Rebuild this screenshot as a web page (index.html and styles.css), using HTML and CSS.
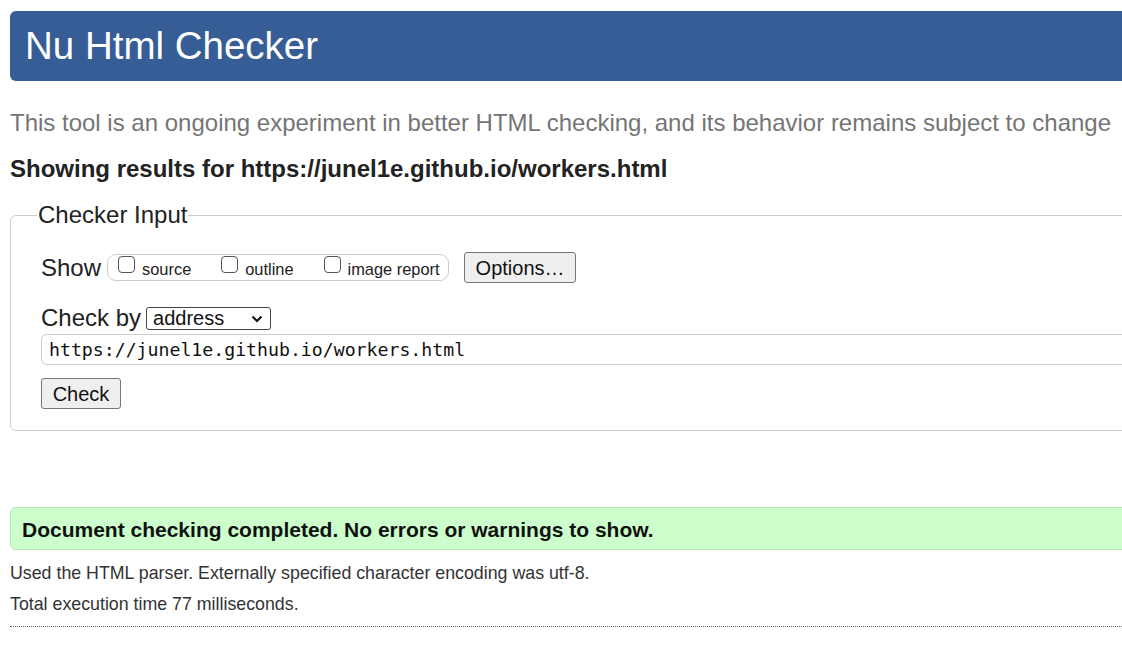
FILE: index.html
```html
<!DOCTYPE html>
<html lang="en">
<head>
<meta charset="utf-8">
<title>Nu Html Checker</title>
<link rel="stylesheet" href="styles.css">
</head>
<body>
<div class="page">
  <h1 class="banner">Nu Html Checker</h1>
  <p class="about">This tool is an ongoing experiment in better HTML checking, and its behavior remains subject to change</p>
  <h2 class="results">Showing results for https://junel1e.github.io/workers.html</h2>
  <form class="checker">
    <fieldset class="inputs">
      <legend class="legend">Checker Input</legend>
      <div class="row show-row">
        <span class="label">Show</span>
        <span class="show-group">
          <label class="opt"><input type="checkbox" class="box"><span>source</span></label>
          <label class="opt"><input type="checkbox" class="box"><span>outline</span></label>
          <label class="opt last"><input type="checkbox" class="box"><span>image report</span></label>
        </span>
        <button type="button" class="btn options">Options…</button>
      </div>
      <div class="row by-row">
        <span class="label">Check by</span>
        <span class="select-wrap">
          <select class="select"><option>address</option></select>
          <svg class="chev" width="12" height="8" viewBox="0 0 12 8"><path d="M1.5 1.5 L6 6 L10.5 1.5" fill="none" stroke="#111" stroke-width="2.2"/></svg>
        </span>
      </div>
      <input class="url" type="text" value="https://junel1e.github.io/workers.html">
      <div class="row submit-row">
        <button type="button" class="btn check">Check</button>
      </div>
    </fieldset>
  </form>
  <p class="success">Document checking completed. No errors or warnings to show.</p>
  <p class="info">Used the HTML parser. Externally specified character encoding was utf-8.</p>
  <p class="info">Total execution time 77 milliseconds.</p>
  <hr class="rule">
</div>
</body>
</html>
```
FILE: styles.css
```css
html {
  overflow: hidden;
}
body {
  margin: 0;
  font-family: "Liberation Sans", Arial, sans-serif;
  color: #222;
  background: #fff;
}
.page {
  width: 1200px;
  padding: 11px 0 0 10px;
}
.banner {
  margin: 0;
  height: 70px;
  line-height: 70px;
  padding-left: 15px;
  background: #365d95;
  color: #fff;
  font-size: 38.5px;
  font-weight: normal;
  border-radius: 6px;
}
.about {
  margin: 28px 0 0;
  font-size: 24px;
  line-height: 28px;
  color: #757575;
}
.results {
  margin: 19px 0 0;
  font-size: 24px;
  line-height: 26px;
  font-weight: bold;
  color: #222;
}
.checker {
  margin: 19px 0 0;
}
.inputs {
  margin: 0;
  border: 1px solid #cccccc;
  border-radius: 6px;
  padding: 0 0 21px 30px;
  min-width: 0;
}
.legend {
  margin-left: -4px;
  padding: 0 1px;
  font-size: 24px;
  line-height: 28px;
  color: #222;
}
.row {
  display: flex;
  align-items: center;
}
.label {
  font-size: 24px;
  color: #222;
}
.show-row {
  margin-top: 23px;
  height: 31px;
}
.show-group {
  display: flex;
  align-items: flex-start;
  margin-left: 6px;
  height: 25px;
  border: 1px solid #cccccc;
  border-radius: 9px;
  padding: 0 8px 0 10px;
}
.opt {
  display: flex;
  align-items: flex-start;
  margin-right: 30px;
  font-size: 16.4px;
  color: #222;
}
.opt.last {
  margin-right: 0;
}
.opt span {
  padding-top: 5px;
}
.box {
  appearance: none;
  -webkit-appearance: none;
  width: 17px;
  height: 17px;
  margin: 1px 7px 0 0;
  border: 1px solid #555;
  border-radius: 4px;
  background: #fff;
}
.btn {
  font-family: "Liberation Sans", Arial, sans-serif;
  font-size: 20px;
  color: #111;
  background: #efefef;
  border: 1px solid #767676;
  border-radius: 3px;
  height: 31px;
  padding: 1px 11px 0;
}
.options {
  margin-left: 15px;
  width: 112px;
}
.by-row {
  margin-top: 23px;
  height: 24px;
}
.select-wrap {
  position: relative;
  margin-left: 5px;
  display: inline-block;
  height: 23px;
}
.select {
  appearance: none;
  -webkit-appearance: none;
  width: 125px;
  height: 23px;
  border: 1px solid #444;
  border-radius: 3px;
  background: #fff;
  font-family: "Liberation Sans", Arial, sans-serif;
  font-size: 20px;
  color: #111;
  padding: 0 0 0 6px;
  line-height: 21px;
}
.chev {
  position: absolute;
  right: 8px;
  top: 8px;
  pointer-events: none;
}
.url {
  display: block;
  box-sizing: border-box;
  margin: 4px 0 0;
  width: calc(100% + 2px);
  height: 31px;
  border: 1px solid #cccccc;
  border-radius: 6px;
  padding: 0 0 0 7px;
  font-family: "DejaVu Sans Mono", "Liberation Mono", monospace;
  font-size: 18.2px;
  color: #111;
  background: #fff;
}
.submit-row {
  margin-top: 13px;
}
.check {
  width: 80px;
  padding: 1px 0 0;
}
.success {
  margin: 76px 0 0;
  height: 39px;
  padding-top: 2px;
  line-height: 39px;
  border: 1px solid #b5e6b5;
  border-radius: 6px;
  background: #ccffcc;
  padding-left: 11px;
  font-size: 21px;
  font-weight: bold;
  color: #111;
}
.info {
  margin: 13px 0 0;
  font-size: 17.8px;
  line-height: 20px;
  color: #333;
}
.info + .info {
  margin-top: 11px;
}
.rule {
  margin: 12px 0 0;
  border: 0;
  border-top: 1px dotted #666;
  height: 0;
}
```
